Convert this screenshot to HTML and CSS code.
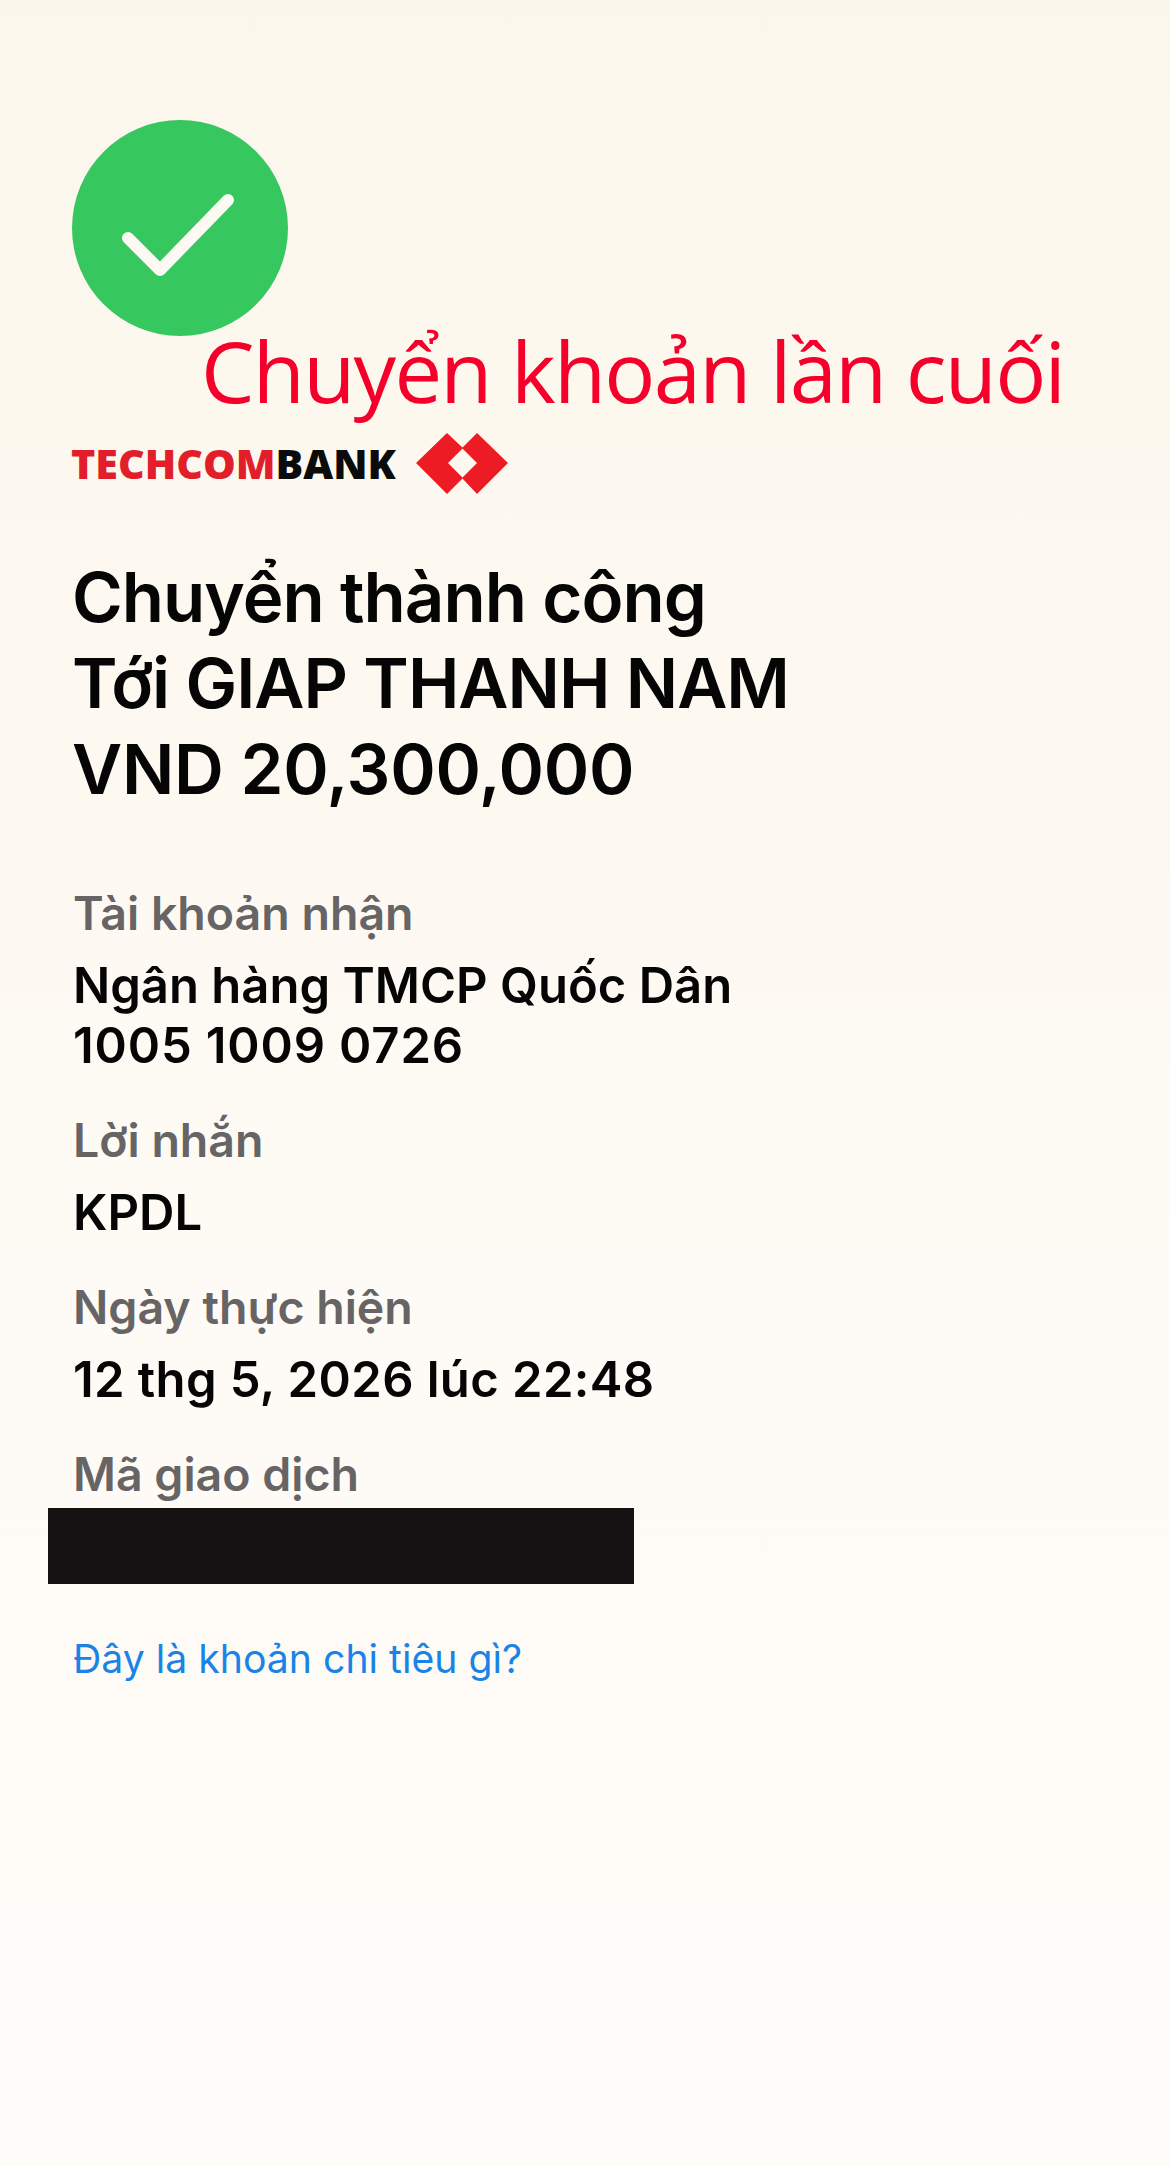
FILE: index.html
```html
<!DOCTYPE html>
<html lang="vi">
<head>
  <meta charset="UTF-8">
  <meta name="viewport" content="width=device-width, initial-scale=1.0">
  <title>Chuyển thành công</title>
  <link rel="stylesheet" href="styles.css">
</head>
<body>

<div class="page">
  <div class="status-icon">
    <svg width="216" height="216" viewBox="0 0 216 216">
      <circle cx="108" cy="108" r="108" fill="#36c75e"/>
      <path d="M56 118 L88 150 L156 80" fill="none" stroke="#fdfaf3" stroke-width="12" stroke-linecap="round" stroke-linejoin="round"/>
    </svg>
  </div>

  <div class="caption">Chuyển khoản lần cuối</div>

  <div class="logo">
    <span class="logo-text"><span class="logo-red">TECHCOM</span>BANK</span>
    <svg width="92" height="63" viewBox="0 0 92 63">
      <polygon points="0,31 31,1 47,16 32,31 47,46 31,62" fill="#ed1c24"/>
      <polygon points="92,31 61,1 46,16 61,31 46,46 61,62" fill="#ed1c24"/>
    </svg>
  </div>

  <h1 class="title">Chuyển thành công<br>Tới GIAP THANH NAM<br><span class="amount">VND 20,300,000</span></h1>

  <div class="fields">
    <div class="field">
      <div class="label">Tài khoản nhận</div>
      <div class="value">Ngân hàng TMCP Quốc Dân<br><span class="account">1005 1009 0726</span></div>
    </div>
    <div class="field">
      <div class="label">Lời nhắn</div>
      <div class="value">KPDL</div>
    </div>
    <div class="field">
      <div class="label">Ngày thực hiện</div>
      <div class="value date">12 thg 5, 2026 lúc 22:48</div>
    </div>
    <div class="field">
      <div class="label">Mã giao dịch</div>
      <div class="redacted"></div>
    </div>
  </div>

  <a class="link" href="#">Đây là khoản chi tiêu gì?</a>
</div>

</body>
</html>
```

FILE: styles.css
```css
html, body {
  margin: 0;
  padding: 0;
}
body {
  height: 2166px;
  overflow: hidden;
  background: linear-gradient(180deg, #fcf7ec 0%, #fdf9f1 35%, #fefbf6 65%, #fefcf9 100%);
  font-family: Inter, "Liberation Sans", sans-serif;
  color: #050505;
}
.page {
  padding: 120px 0 0 73px;
}
.status-icon {
  height: 216px;
  margin-left: -1px;
}
.status-icon svg {
  display: block;
}
.caption {
  margin: -11px 0 0 128px;
  font-family: "Open Sans", sans-serif;
  font-size: 85px;
  line-height: 90px;
  letter-spacing: -1.75px;
  color: #f5002a;
  white-space: nowrap;
}
.logo {
  display: flex;
  align-items: center;
  gap: 20px;
  margin: 17px 0 0 -2px;
  height: 63px;
}
.logo-text {
  font-family: "Open Sans", sans-serif;
  font-weight: 800;
  font-size: 41.2px;
  line-height: 63px;
  color: #0b0b0b;
}
.logo-red {
  color: #e31e2b;
}
.title {
  margin: 59px 0 0 -1px;
  font-size: 69px;
  line-height: 86px;
  font-weight: 600;
  letter-spacing: -1px;
}
.amount {
  letter-spacing: -0.3px;
}
.fields {
  margin-top: 71px;
}
.field {
  margin-top: 34px;
}
.field:first-child {
  margin-top: 0;
}
.label {
  font-size: 46.5px;
  line-height: 60px;
  font-weight: 600;
  color: #666464;
}
.value {
  margin-top: 13px;
  font-size: 49px;
  line-height: 60px;
  font-weight: 600;
}
.account {
  letter-spacing: 0.85px;
}
.date {
  letter-spacing: 0.4px;
}
.redacted {
  width: 586px;
  height: 76px;
  margin: 4px 0 0 -25px;
  background: #141213;
}
.link {
  display: block;
  margin-top: 50px;
  font-size: 39.2px;
  line-height: 50px;
  color: #1a84e6;
  text-decoration: none;
}
```
